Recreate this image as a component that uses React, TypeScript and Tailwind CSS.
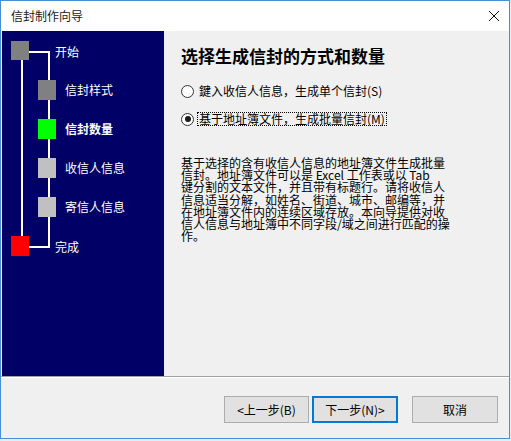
import React from 'react';

const font = { fontFamily: '"Noto Sans CJK SC", "Liberation Sans", sans-serif' };

const steps = [
	{ label: '信封样式', top: 49, color: 'bg-[#808080]', bold: false },
	{ label: '信封数量', top: 88, color: 'bg-[#00ff00]', bold: true },
	{ label: '收信人信息', top: 127, color: 'bg-[#c0c0c0]', bold: false },
	{ label: '寄信人信息', top: 166, color: 'bg-[#c0c0c0]', bold: false },
];

const descLines = [
	'基于选择的含有收信人信息的地址簿文件生成批量',
	'信封。地址簿文件可以是 Excel 工作表或以 Tab',
	'键分割的文本文件，并且带有标题行。请将收信人',
	'信息适当分解，如姓名、街道、城市、邮编等，并',
	'在地址簿文件内的连续区域存放。本向导提供对收',
	'信人信息与地址簿中不同字段/域之间进行匹配的操',
	'作。',
];

const Radio: React.FC<{ checked?: boolean; label: string; focused?: boolean }> = ({ checked, label, focused }) => (
	<div className="flex items-center h-4 gap-[3px]">
		<span className="w-[13px] h-[13px] rounded-full border border-[#333333] bg-white flex items-center justify-center">
			{checked && <span className="w-[6px] h-[6px] rounded-full bg-[#1a1a1a]" />}
		</span>
		<span
			className={
				'text-[12px] leading-[12px] text-black px-[1px] ' +
				(focused ? 'border border-dotted border-black' : 'border border-transparent')
			}
		>
			{label}
		</span>
	</div>
);

const WizardNav: React.FC = () => (
	<div className="relative w-[162px] bg-[#000066] text-white">
		{/* 开始 */}
		<div className="absolute left-[9px] top-[10px] w-[18px] h-[19px] bg-[#808080]" />
		<div className="absolute left-[27px] top-[20px] w-[21px] h-[2px] bg-white" />
		<div className="absolute left-[46px] top-[20px] w-[2px] h-[197px] bg-white" />
		<div className="absolute left-[19px] top-[29px] w-[2px] h-[177px] bg-white" />
		<div className="absolute left-[27px] top-[215px] w-[21px] h-[2px] bg-white" />
		<div className="absolute left-[9px] top-[205px] w-[18px] h-[20px] bg-[#ff0000]" />
		<span className="absolute left-[53px] top-[13px] text-[12px] leading-[16px]">开始</span>
		{steps.map((s) => (
			<React.Fragment key={s.label}>
				<div className={'absolute left-[36px] w-[18px] h-[20px] ' + s.color} style={{ top: s.top }} />
				<span
					className={'absolute left-[63px] text-[12px] leading-[16px] ' + (s.bold ? 'font-bold' : '')}
					style={{ top: s.top + 2 }}
				>
					{s.label}
				</span>
			</React.Fragment>
		))}
		<span className="absolute left-[53px] top-[208px] text-[12px] leading-[16px]">完成</span>
	</div>
);

export default function App() {
	return (
		<div className="w-[511px] h-[441px] bg-[#e6edf5]" style={font}>
			<div className="w-[510px] h-[439px] border border-[#4a8fd6] bg-[#f0f0f0] flex flex-col">
				<div className="h-[30px] bg-white flex items-center justify-between pl-[10px] pr-[8px]">
					<span className="text-[12px] text-[#1a1a1a]">信封制作向导</span>
					<svg width="12" height="12" viewBox="0 0 12 12" className="mr-[1px]">
						<path d="M1 1 L11 11 M11 1 L1 11" stroke="#111" strokeWidth="1" />
					</svg>
				</div>
				<div className="h-[345px] flex pl-[1px]">
					<WizardNav />
					<div className="flex-1 flex flex-col pl-[17px] pt-[15px] text-black">
						<h1 className="text-[17px] leading-[20px] font-bold">选择生成信封的方式和数量</h1>
						<div className="mt-[17px]">
							<Radio label="鍵入收信人信息，生成单个信封(S)" />
						</div>
						<div className="mt-[12px]">
							<Radio checked focused label="基于地址簿文件，生成批量信封(M)" />
						</div>
						<div className="mt-[30px] text-[12px] leading-[12.2px] whitespace-pre">
							{descLines.map((l) => (
								<div key={l}>{l}</div>
							))}
						</div>
					</div>
				</div>
				<div className="h-[1px] bg-[#a0a0a0]" />
				<div className="h-[1px] bg-white" />
				<div className="flex-1 flex justify-end items-start pt-[18px] pr-[11px]">
					<button className="w-[85px] h-[27px] bg-[#e1e1e1] border border-[#adadad] text-[12px] text-black">
						&lt;上一步(B)
					</button>
					<button className="ml-[3px] w-[86px] h-[27px] bg-[#e1e1e1] border border-[#0078d7] shadow-[inset_0_0_0_1px_#0078d7] text-[12px] text-black">
						下一步(N)&gt;
					</button>
					<button className="ml-[14px] w-[86px] h-[27px] bg-[#e1e1e1] border border-[#adadad] text-[12px] text-black">
						取消
					</button>
				</div>
			</div>
		</div>
	);
}
